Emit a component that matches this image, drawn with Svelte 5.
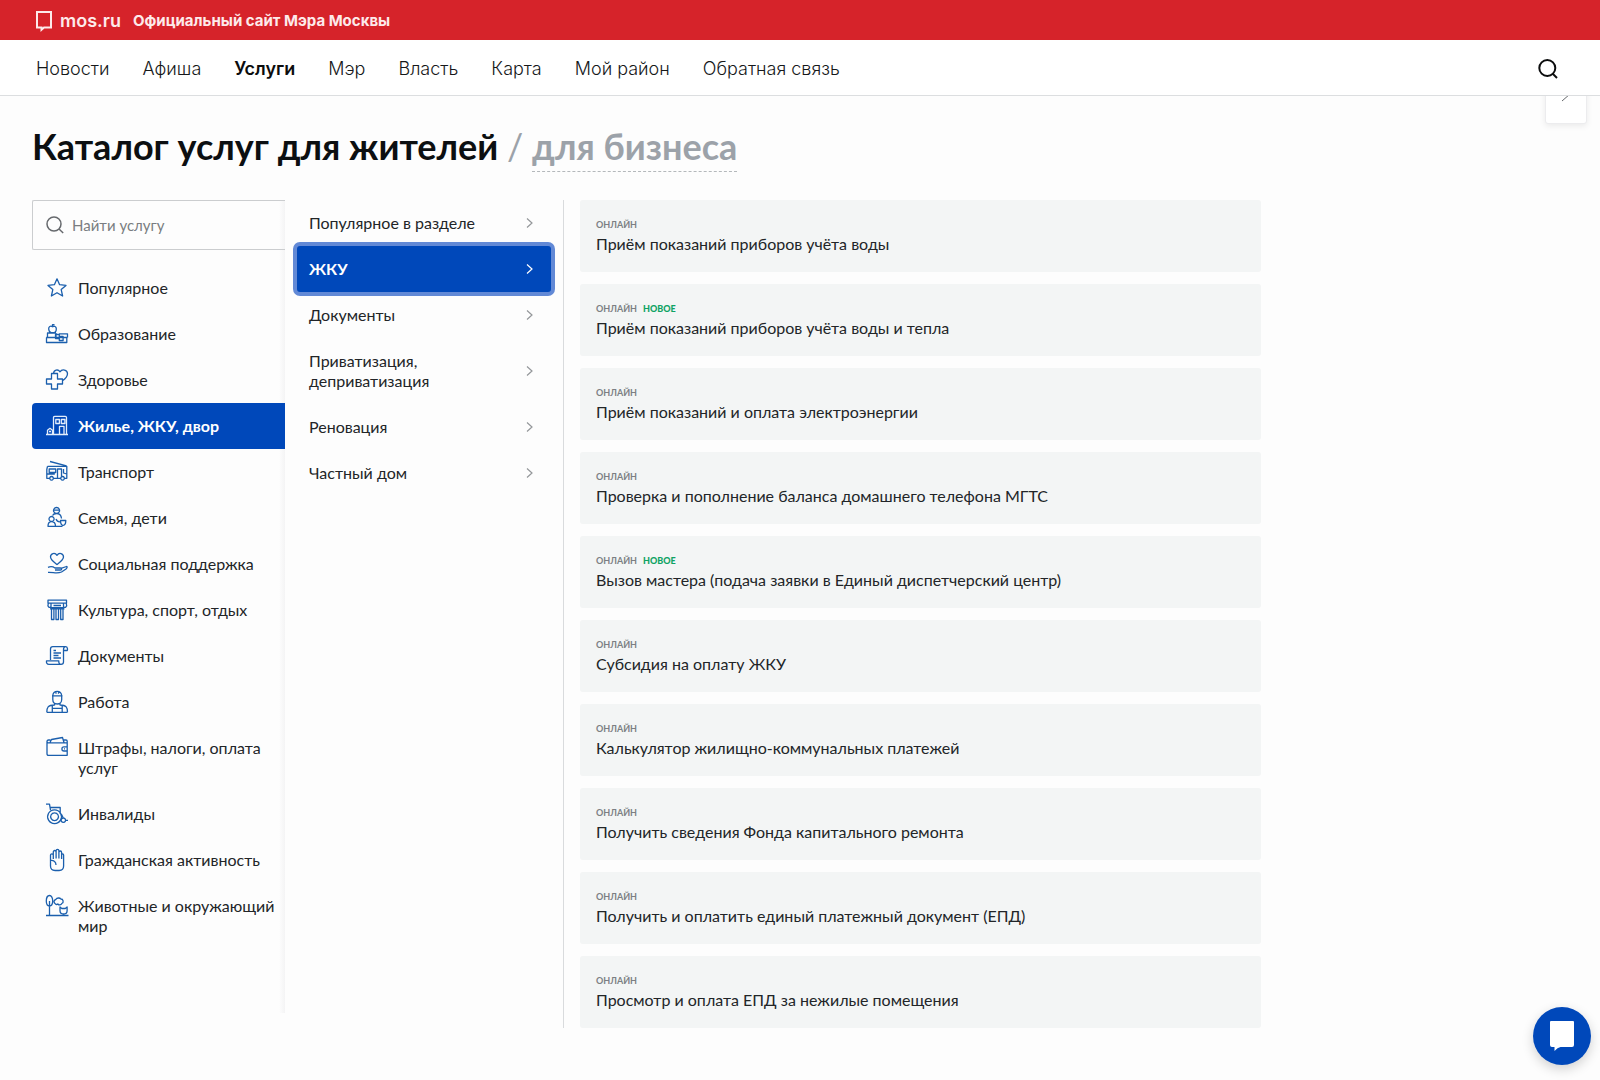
<script lang="ts">
  const nav = ['Новости', 'Афиша', 'Услуги', 'Мэр', 'Власть', 'Карта', 'Мой район', 'Обратная связь'];
  const currentNav = 'Услуги';

  const categories = [
    { name: 'Популярное', icon: 'star' },
    { name: 'Образование', icon: 'education' },
    { name: 'Здоровье', icon: 'health' },
    { name: 'Жилье, ЖКУ, двор', icon: 'house' },
    { name: 'Транспорт', icon: 'transport' },
    { name: 'Семья, дети', icon: 'family' },
    { name: 'Социальная поддержка', icon: 'social' },
    { name: 'Культура, спорт, отдых', icon: 'culture' },
    { name: 'Документы', icon: 'document' },
    { name: 'Работа', icon: 'work' },
    { name: 'Штрафы, налоги, оплата услуг', icon: 'wallet' },
    { name: 'Инвалиды', icon: 'wheelchair' },
    { name: 'Гражданская активность', icon: 'hand' },
    { name: 'Животные и окружающий мир', icon: 'nature' }
  ];
  let category = $state('Жилье, ЖКУ, двор');

  const sections = ['Популярное в разделе', 'ЖКУ', 'Документы', 'Приватизация, деприватизация', 'Реновация', 'Частный дом'];
  let section = $state('ЖКУ');

  const services = [
    { title: 'Приём показаний приборов учёта воды', fresh: false },
    { title: 'Приём показаний приборов учёта воды и тепла', fresh: true },
    { title: 'Приём показаний и оплата электроэнергии', fresh: false },
    { title: 'Проверка и пополнение баланса домашнего телефона МГТС', fresh: false },
    { title: 'Вызов мастера (подача заявки в Единый диспетчерский центр)', fresh: true },
    { title: 'Субсидия на оплату ЖКУ', fresh: false },
    { title: 'Калькулятор жилищно-коммунальных платежей', fresh: false },
    { title: 'Получить сведения Фонда капитального ремонта', fresh: false },
    { title: 'Получить и оплатить единый платежный документ (ЕПД)', fresh: false },
    { title: 'Просмотр и оплата ЕПД за нежилые помещения', fresh: false }
  ];

  const icons: Record<string, string> = {
    star: 'M12 2.8l2.6 5.9 6.4.7-4.8 4.2 1.4 6.4-5.6-3.3L6.4 20l1.4-6.4L3 9.4l6.400-.7z',
    education:
      'M7.500 4.800C5.500 3.400 3.500 4.600 3.700 7c.2 2.100 1.300 3.600 2.700 3.600h2.400c1.600 0 2.500-1.900 2.500-3.800C11.300 4.500 9.200 3.600 7.500 4.800zM7.500 4.800V2.600h2M2.500 15.500V11H11M11 11v4.500M14 11.800h8.500v3.700M1.200 15.500h21.300M1.500 15.500v5h20.300v-5M10.500 12.500h3.800v4h-3.800zM14.300 14.500h3.800v4h-3.800z',
    health:
      'M6.500 5.500h6V11h5v5h-5v5h-6v-5h-5v-5h5zM8.500 5.500C8.800 1.800 13 .8 15 3.800c2-3.200 7.500-2.200 7.500 1.900 0 2.800-2.200 5-5 7.100',
    house:
      'M8.500 20.500V3.500c0-.8.4-1.200 1.200-1.200h10.600c.8 0 1.200.4 1.200 1.200v17M1 20.500h22M10.800 5.500h3.600v4h-3.600zM16.300 5.500h3.600v4h-3.600zM14.500 20.500v-8.200h4.500v8.200M2.500 20.500v-4.200l2.500-2 2.500 2v4.200M4 17.500h2',
    transport:
      'M5 1.500l16.500 4.300M2.500 6.300h19.300v12H19.500M15.500 18.300H8.500M4.500 18.300H1.800V9.500l.7-3.200M1.800 14h8M4.200 9h6.500v3.500H4.200zM12.500 18V9h4v7M18.500 9v4l3.300 1M6.500 16.500a1.800 1.800 0 1 0 .1 0zM17.500 16.500a1.800 1.800 0 1 0 .1 0z',
    family:
      'M11.500 1.500a3 3 0 1 0 .1 0zM8.600 4.200h6M7.500 9.500c.7-1.300 2-2 4-2 3 0 4.700 1.500 5 5M6.500 10.500a2.500 2.500 0 1 0 .1 0zM3 20.300c0-3 1-4.600 3.500-4.600s4 1.600 4 4.600zM10.500 20.300h7M11 13c1 2.500 2.800 3 4.500 2.700M15.500 14.500h5.300c0 3-.8 4.800-2.700 4.800s-2.600-1.800-2.600-4.800z',
    social:
      'M12 12.500C8.500 9.900 5.500 7.800 5.500 5c0-3.700 4.500-4.800 6.500-1.700C14 .2 18.500 1.300 18.500 5c0 2.800-3 4.900-6.500 7.500zM3 15.300c3.500-1.400 5-.8 7 .7h5.500c1.500 0 1.500 2 0 2H10M16 16.300l5.500-1.800c1.200 0 .5 1.600-.5 2.500l-4.500 3c-5 2-8 0-13.500.3',
    culture:
      'M3 2.200h18.500v3H3zM6 5.200v4.500h12.500V5.200M3.300 5.500C2 8.800 4.800 10.500 6 8.500M21.300 5.500c1.300 3.300-1.500 5-2.800 3M5 10.800h14.500M6.500 11v10.500h2.400V11M11 11v10.500h2.500V11M15.700 11v10.500H18V11M8.500 7.500h7.500',
    document:
      'M5.500 16V5c0-1.500.8-2.300 2.200-2.300h12.800c2.500 0 2 3.500 1.800 3.800h-3.800M20.300 2.700c-1.500.3-1.800 1.500-1.800 3V18c0 1.500-1 2.300-2.500 2.300H4c-2 0-2.800-1.300-2.500-3.500h12.300c-.2 2 .5 3.500 2.200 3.500M8.500 6.500h2.500M8.500 9h7.500M8.500 11.500h5M8.500 14h7.500',
    work:
      'M7 5.800h10.500M7.800 5.500C8 2.800 9.500 1.300 12.200 1.300s4.200 1.500 4.500 4.200M11 1.500v2.200M13.500 1.500v2.200M7.800 6v3.500c0 2.500 1.700 4.500 4.400 4.500s4.500-2 4.500-4.500V6M9.500 13.500v2M15 13.500v2M1.800 22.300c0-4.800 1-7.300 7.700-7.300M22.500 22.300c0-4.800-1-7.300-7.500-7.300M1.800 22.300h20.700M7.300 15.500V22M17.200 15.500V22M7.300 18.300h9.900',
    wallet:
      'M2 5.500c0-1 .5-1.500 1.500-1.500h2M2 5.500c0 1 .5 1.300 1.500 1.300h18.700v12.500H3.500c-1 0-1.500-.5-1.500-1.500zM5 6.500L6.500 3.500 17.500 1.500l1.500 5M18.500 4h2.500c.8 0 1.200.4 1.200 1.200v1.600M22.200 10.800H19c-2.800 0-2.800 4.200 0 4.200h3.200M19 12.900h1',
    wheelchair:
      'M1 2.200h3.500l1 6M5.200 5.500h10v6.500M9.500 7.800a6.900 6.900 0 1 0 .1 0zM9.500 10.800a3.900 3.900 0 1 0 .1 0zM18.300 16a2.200 2.200 0 1 0 .1 0zM16.300 12l2 4M20.500 18.300h2.500',
    hand:
      'M5.500 12.500V7.300c0-2 2.800-2 2.800 0V11M8.300 10V4c0-2 2.800-2 2.800 0v6.500M11.100 4V2.800c0-2 2.800-2 2.800 0v7.700M13.900 4.500c0-2 2.700-2 2.700 0V11M16.600 7c0-1.500 2-1.500 2 0v11c0 2.700-1.800 4.500-4.500 4.500h-4c-2.800 0-4.600-1.800-4.600-4.500v-5.500c3.500-.3 5.500 1.500 5.500 4.500',
    nature:
      'M1 21.500h22.500M4.500 21.500V7M4.500 1.500C2.500 1.500 1.300 4 1.300 7s1.200 5 3.200 5 3.200-2 3.200-5-1.200-5.500-3.200-5.500zM10.500 10c-2-1-2-4 .3-4.500C12 3.500 15 3.700 15.800 5c2.500 0 3.300 3.500 1 4.500-.8 1.800-3 1.800-4 .5-.8.6-1.800.5-2.300 0zM15 13l1.800 1.500h3.500L22.100 13v3.800c0 2-1.500 3.200-3.500 3.200S15 18.800 15 16.800z'
  };
</script>

<header>
  <div class="brand">
    <a class="logo" href="#home">
      <svg width="18" height="22" viewBox="0 0 18 22" aria-hidden="true">
        <path d="M2 2h14v15.500H9l-2.500 2.200v-2.200H2z" fill="none" stroke="currentColor" stroke-width="2" />
      </svg>
      <span>mos.ru</span>
    </a>
    <span class="tagline">Официальный сайт Мэра Москвы</span>
  </div>
  <div class="menu">
    <nav aria-label="Основная навигация">
      {#each nav as item}
        <a href="#{item}" class:current={item === currentNav}>{item}</a>
      {/each}
    </nav>
    <button class="search-toggle" aria-label="Поиск">
      <svg width="22" height="22" viewBox="0 0 22 22" aria-hidden="true">
        <circle cx="10.300" cy="10" r="8" />
        <path d="M15.500 15.500l4.500 4.500" />
      </svg>
    </button>
  </div>
</header>

<button class="side-tab" aria-label="Развернуть">
  <svg width="14" height="16" viewBox="0 0 14 16" aria-hidden="true"><path d="M3 1l8 7-8 7" /></svg>
</button>

<main>
  <h1>Каталог услуг для жителей <span class="slash">/</span> <a href="#business">для бизнеса</a></h1>

  <div class="catalog">
    <aside>
      <label class="search">
        <svg width="18" height="18" viewBox="0 0 18 18" aria-hidden="true">
          <circle cx="8" cy="8" r="7" />
          <path d="M13 13l4.200 4" />
        </svg>
        <input type="text" placeholder="Найти услугу" aria-label="Найти услугу" />
      </label>
      <ul class="categories">
        {#each categories as item}
          <li>
            <button class:active={item.name === category} onclick={() => (category = item.name)}>
              <svg width="24" height="24" viewBox="0 0 24 24" aria-hidden="true"><path d={icons[item.icon]} /></svg>
              <span>{item.name}</span>
            </button>
          </li>
        {/each}
      </ul>
    </aside>

    <ul class="sections">
      {#each sections as item}
        <li>
          <button class:active={item === section} onclick={() => (section = item)}>
            <span>{item}</span>
            <svg width="8" height="12" viewBox="0 0 8 12" aria-hidden="true"><path d="M1 1.500L6 6l-5 4.500" /></svg>
          </button>
        </li>
      {/each}
    </ul>

    <ul class="services">
      {#each services as item}
        <li>
          <a href="#service">
            <span class="tags">
              <span>ОНЛАЙН</span>
              {#if item.fresh}<span class="fresh">НОВОЕ</span>{/if}
            </span>
            <span class="title">{item.title}</span>
          </a>
        </li>
      {/each}
    </ul>
  </div>
</main>

<button class="chat" aria-label="Открыть чат">
  <svg width="26" height="32" viewBox="0 0 26 32" aria-hidden="true">
    <path d="M2 1h22q1 0 1 1v23q0 2-2 2H11.500q-3 .5-6 4V27H3q-2 0-2-2V2q0-1 1-1z" fill="currentColor" />
  </svg>
</button>

<style>
  :global(body) {
    background: #fdfdfd;
    color: #222528;
    font: 16px/20px Lato, sans-serif;
  }

  ul {
    list-style: none;
    margin: 0;
    padding: 0;
  }

  button {
    border: 0;
    background: none;
    padding: 0;
    color: inherit;
    font: inherit;
    text-align: left;
    cursor: pointer;
  }

  a {
    color: inherit;
    text-decoration: none;
  }

  header {
    position: relative;
    z-index: 2;
    font-family: Inter, sans-serif;
  }

  .brand {
    display: flex;
    align-items: center;
    gap: 12px;
    box-sizing: border-box;
    height: 40px;
    padding: 2px 35px 0;
    background: #d6232a;
    color: #fdeaea;
  }

  .logo {
    display: flex;
    align-items: center;
    gap: 7px;
    font-size: 18px;
    font-weight: 600;
  }

  .tagline {
    font-size: 15px;
    font-weight: 700;
  }

  .menu {
    display: flex;
    align-items: center;
    justify-content: space-between;
    box-sizing: border-box;
    height: 56px;
    padding: 2px 41px 0 36px;
    border-bottom: 1px solid #dcdee0;
    background: #fff;
  }

  nav {
    display: flex;
    gap: 33px;
    font-size: 18px;
    font-weight: 300;
    line-height: 24px;
    color: #16181a;
  }

  nav .current {
    font-weight: 600;
    color: #0c0d0e;
  }

  .search-toggle {
    display: flex;
  }

  .search-toggle svg {
    fill: none;
    stroke: #0c0d0e;
    stroke-width: 2;
  }

  .side-tab {
    position: absolute;
    z-index: 1;
    top: 72px;
    right: 13px;
    box-sizing: border-box;
    width: 42px;
    height: 52px;
    padding-bottom: 8px;
    display: flex;
    align-items: center;
    justify-content: center;
    border: 1px solid #ececee;
    border-radius: 3px;
    background: #fff;
    box-shadow: 0 2px 6px rgba(0, 0, 0, 0.08);
  }

  .side-tab svg {
    fill: none;
    stroke: #66696c;
  }

  main {
    padding: 26px 32px 52px;
  }

  h1 {
    margin: 0 0 28px;
    font-size: 36px;
    font-weight: 700;
    line-height: 48px;
    color: #0c0f11;
  }

  h1 a {
    display: inline-block;
    padding-bottom: 1px;
    border-bottom: 1px dashed #b4b8bb;
    color: #9ca2a9;
  }

  .slash {
    font-weight: 400;
    color: #9ca2a9;
  }

  .catalog {
    display: grid;
    grid-template-columns: 253px 279px minmax(0, 1fr);
    max-width: 1229px;
  }

  aside {
    margin-bottom: 15px;
    background: linear-gradient(to left, #f4f4f5, #fdfdfd 6px);
  }

  .search {
    display: flex;
    align-items: center;
    gap: 8px;
    height: 48px;
    padding-left: 13px;
    border: 1px solid #cbcdcf;
    border-right: 0;
    border-radius: 2px 0 0 2px;
  }

  .search svg {
    flex: none;
    fill: none;
    stroke: #66696d;
    stroke-width: 1.5;
  }

  .search input {
    flex: 1;
    min-width: 0;
    padding: 0;
    border: 0;
    outline: 0;
    background: none;
    font: 15px/20px Lato, sans-serif;
    color: inherit;
  }

  .search input::placeholder {
    color: #7a7d81;
    opacity: 1;
  }

  .categories {
    margin-top: 15px;
  }

  .categories button {
    display: flex;
    gap: 9px;
    width: 100%;
    padding: 11px 9px 11px 13px;
    border-radius: 4px 0 0 4px;
  }

  .categories svg {
    flex: none;
    fill: none;
    stroke: #1b5fad;
    stroke-width: 1.3;
    stroke-linejoin: round;
  }

  .categories span {
    padding: 2px 0;
  }

  .active {
    background: #0048ba;
    color: #fff;
    font-weight: 700;
  }

  .categories .active svg {
    stroke: #e3edfb;
  }

  .sections {
    margin-left: 12px;
    padding-right: 12px;
    border-right: 1px solid #d9dbdd;
  }

  .sections button {
    display: flex;
    align-items: center;
    justify-content: space-between;
    gap: 40px;
    width: 100%;
    padding: 13px 17px 13px 12px;
    border-radius: 3px;
  }

  .sections .active {
    box-shadow: 0 0 0 4px #6289d6;
  }

  .sections svg {
    flex: none;
    fill: none;
    stroke: #94979a;
    stroke-width: 1.2;
  }

  .sections .active svg {
    stroke: #fff;
  }

  .services {
    display: grid;
    gap: 12px;
    margin-left: 16px;
  }

  .services a {
    display: block;
    padding: 19px 16px 16px;
    border-radius: 3px;
    background: #f3f5f5;
  }

  .tags {
    display: flex;
    gap: 6px;
    font-size: 9px;
    font-weight: 700;
    line-height: 12px;
    color: #7c7f83;
  }

  .fresh {
    font-weight: 900;
    color: #0fa364;
  }

  .title {
    display: block;
    margin-top: 1px;
    line-height: 24px;
  }

  .chat {
    position: fixed;
    right: 9px;
    bottom: 15px;
    width: 58px;
    height: 58px;
    display: flex;
    align-items: center;
    justify-content: center;
    border-radius: 50%;
    background: #0048ba;
    color: #fff;
    box-shadow: 0 4px 12px rgba(0, 0, 0, 0.18);
  }
</style>
